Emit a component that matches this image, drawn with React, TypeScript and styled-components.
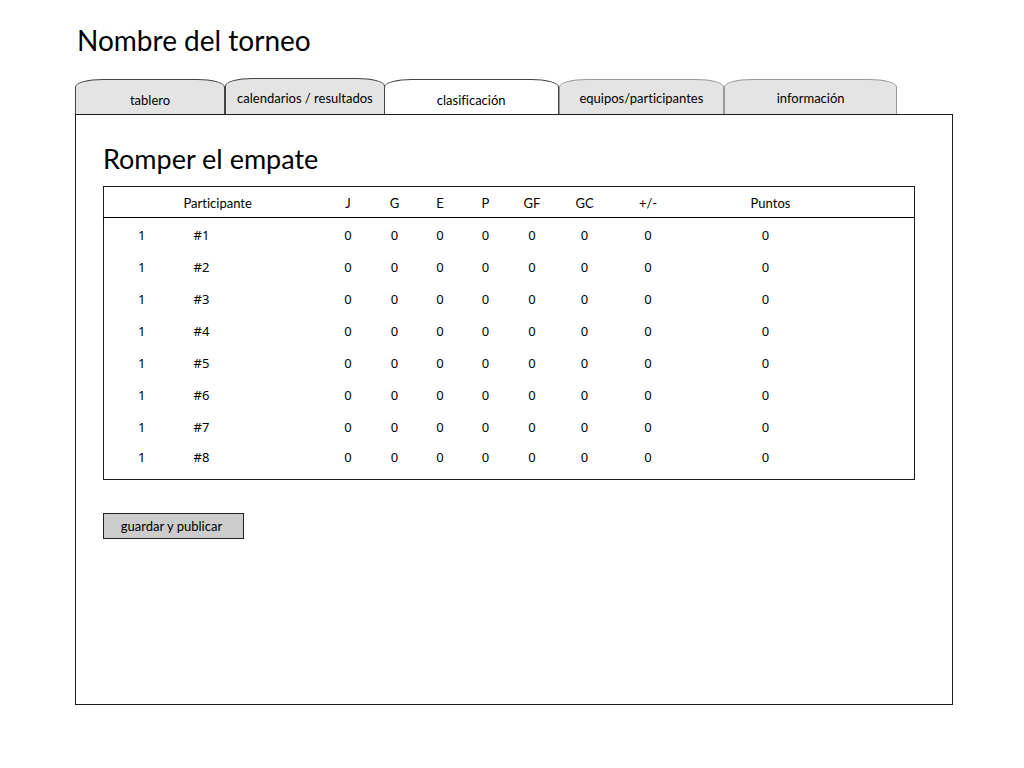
import React, { useState } from "react";
import styled, { createGlobalStyle } from "styled-components";

const GlobalStyle = createGlobalStyle`
  * { box-sizing: border-box; }
  body {
    margin: 0;
    background: #fff;
    color: #000;
    font-family: "Comic Sans MS", Lato, sans-serif;
    font-size: 13px;
    font-variant-ligatures: none;
  }
`;

const Page = styled.main`
  padding: 23px 71px 32px 75px;
`;

const Title = styled.h1`
  margin: 0 0 21px 2px;
  font-size: 28px;
  line-height: 34px;
  font-weight: 400;
`;

const Tabs = styled.div`
  display: flex;
  align-items: flex-end;
  height: 36px;
  margin-right: 56px;
`;

const Tab = styled.button<{ $grow: number; $tall?: boolean; $low?: boolean; $active?: boolean; $edge: string }>`
  position: relative;
  z-index: ${(p) => (p.$active ? 1 : 0)};
  flex: ${(p) => p.$grow} 1 0;
  min-width: 0;
  height: ${(p) => (p.$tall ? 36 : 35)}px;
  padding: ${(p) => (p.$low ? 6 : 2)}px 0 0;
  border: 1px solid ${(p) => p.$edge};
  border-bottom: 0;
  border-radius: 28px 28px 0 0 / 8px 8px 0 0;
  background: ${(p) => (p.$active ? "#fff" : "#e4e4e4")};
  color: #000;
  font: inherit;
  font-variant-ligatures: none;
  line-height: 16px;
  white-space: nowrap;
  cursor: pointer;

  &[aria-selected="true"],
  &[aria-selected="true"] ~ & {
    margin-left: -1px;
  }
`;

const Panel = styled.section`
  min-height: 591px;
  padding: 27px 38px 28px 27px;
  border: 1px solid #1c1c1c;
`;

const Heading = styled.h2`
  margin: 0 0 10px;
  font-size: 27px;
  line-height: 34px;
  font-weight: 400;
`;

const Standings = styled.table`
  width: 100%;
  table-layout: fixed;
  border-collapse: collapse;
  border: 1px solid #1c1c1c;
`;

const Column = styled.col<{ $width: number }>`
  width: ${(p) => p.$width}px;
`;

const HeadRow = styled.tr`
  height: 31px;
  border-bottom: 1px solid #000;
`;

const HeadCell = styled.th<{ $left?: boolean; $inset?: number }>`
  padding: 2px 0 0 ${(p) => p.$inset ?? 0}px;
  font-weight: 400;
  line-height: 16px;
  text-align: ${(p) => (p.$left ? "left" : "center")};
`;

const BodyRow = styled.tr`
  height: 32px;
  &:last-child { height: 38px; }
  &:last-child td { padding-bottom: 8px; }
`;

const Cell = styled.td<{ $left?: boolean; $inset?: number }>`
  padding: 2px 0 0 ${(p) => p.$inset ?? 0}px;
  font-family: "Noto Sans", sans-serif;
  font-size: 13px;
  line-height: 16px;
  text-align: ${(p) => (p.$left ? "left" : "center")};
`;

const SaveButton = styled.button`
  display: block;
  width: 141px;
  height: 26px;
  margin-top: 33px;
  padding: 0 4px 0 0;
  border: 1px solid #222;
  background: #ccc;
  color: #000;
  font: inherit;
  cursor: pointer;
`;

const tabs = [
  { name: "tablero", grow: 150, low: true, edge: "#444" },
  { name: "calendarios / resultados", grow: 160, tall: true, edge: "#444" },
  { name: "clasificación", grow: 175, low: true, edge: "#444" },
  { name: "equipos/participantes", grow: 166, edge: "#999" },
  { name: "información", grow: 173, edge: "#999" },
];

const stats = ["J", "G", "E", "P", "GF", "GC", "+/-"];
const widths = [76, 145, 47, 46, 45, 46, 47, 58, 69, 166, 66];
const participants = ["#1", "#2", "#3", "#4", "#5", "#6", "#7", "#8"];

export default function App() {
  const [active, setActive] = useState(2);
  return (
    <>
      <GlobalStyle />
      <Page>
        <Title>Nombre del torneo</Title>
        <Tabs role="tablist">
          {tabs.map((tab, i) => (
            <Tab
              key={tab.name}
              type="button"
              role="tab"
              aria-selected={i === active}
              $active={i === active}
              $grow={tab.grow}
              $tall={tab.tall}
              $low={tab.low}
              $edge={tab.edge}
              onClick={() => setActive(i)}
            >
              {tab.name}
            </Tab>
          ))}
        </Tabs>
        <Panel>
          <Heading>Romper el empate</Heading>
          <Standings>
            <colgroup>
              {widths.map((width, i) => (
                <Column key={i} $width={width} />
              ))}
            </colgroup>
            <thead>
              <HeadRow>
                <HeadCell />
                <HeadCell scope="col" $left $inset={4}>Participante</HeadCell>
                {stats.map((stat) => (
                  <HeadCell key={stat} scope="col">{stat}</HeadCell>
                ))}
                <HeadCell scope="col" $inset={10}>Puntos</HeadCell>
                <HeadCell />
              </HeadRow>
            </thead>
            <tbody>
              {participants.map((name) => (
                <BodyRow key={name}>
                  <Cell>1</Cell>
                  <Cell $left $inset={14}>{name}</Cell>
                  {stats.map((stat) => (
                    <Cell key={stat}>0</Cell>
                  ))}
                  <Cell>0</Cell>
                  <Cell />
                </BodyRow>
              ))}
            </tbody>
          </Standings>
          <SaveButton type="button">guardar y publicar</SaveButton>
        </Panel>
      </Page>
    </>
  );
}
